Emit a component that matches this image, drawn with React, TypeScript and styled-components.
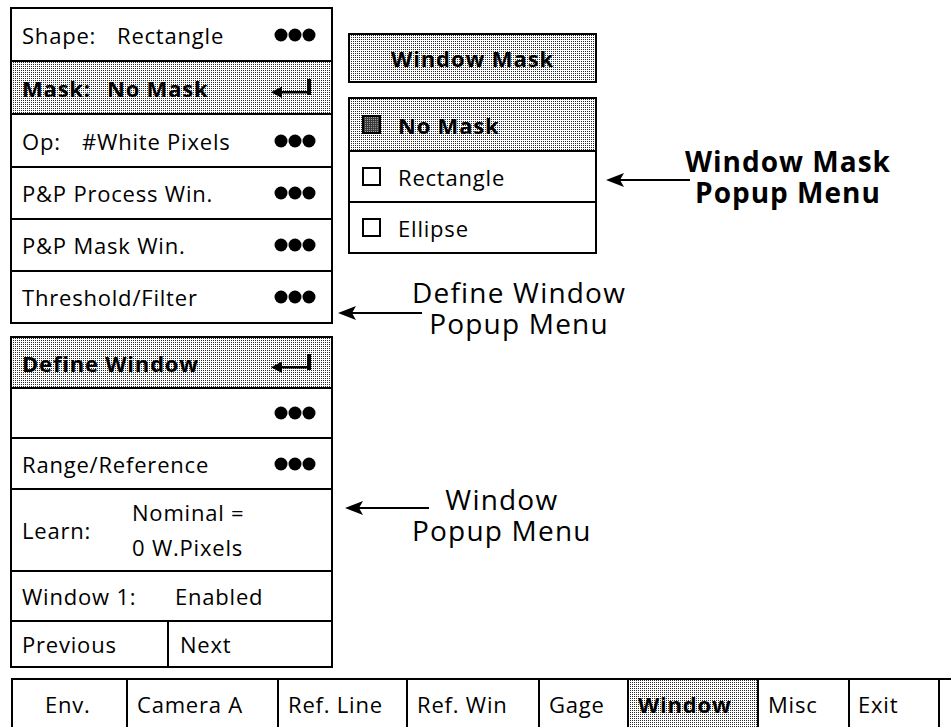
import React from "react";
import styled, { createGlobalStyle, css } from "styled-components";

const GlobalStyle = createGlobalStyle`
  *, *::before, *::after { box-sizing: border-box; }
  html, body { margin: 0; padding: 0; background: #ffffff; overflow: hidden; }
  body { font-family: "Open Sans", "Liberation Sans", sans-serif; color: #000000; }
`;

const shade = css`
  background-color: #ffffff;
  background-image: conic-gradient(#2a2a2a 0 25%, transparent 0 100%);
  background-size: 2px 2px;
`;

const Page = styled.div`
  width: 951px;
  height: 727px;
  padding: 7px 0 0 10px;
  display: flex;
  flex-direction: column;
`;

const Top = styled.div`
  display: flex;
  align-items: flex-start;
`;

const LeftCol = styled.div`
  display: flex;
  flex-direction: column;
  gap: 12px;
  width: 323px;
  flex: none;
`;

const Panel = styled.div`
  border: 2px solid #000;
  display: flex;
  flex-direction: column;
`;

const Row = styled.div<{ $h: number; $shaded?: boolean }>`
  height: ${(p) => p.$h}px;
  display: flex;
  align-items: center;
  padding: 0 15px 0 10px;
  font-size: 22px;
  letter-spacing: 0.8px;
  font-weight: ${(p) => (p.$shaded ? 700 : 400)};
  white-space: nowrap;
  & + & {
    border-top: 2px solid #000;
  }
  ${(p) => p.$shaded && shade}
`;

const Label = styled.span<{ $w?: number }>`
  display: inline-block;
  width: ${(p) => (p.$w ? `${p.$w}px` : "auto")};
  flex: none;
`;

const Stack = styled.div`
  display: flex;
  flex-direction: column;
  line-height: 35px;
`;

const SplitRow = styled(Row)`
  padding: 0;
  align-items: stretch;
`;

const Cell = styled.div<{ $w?: number; $pl: number; $divider?: boolean }>`
  display: flex;
  align-items: center;
  width: ${(p) => (p.$w ? `${p.$w}px` : "auto")};
  flex: ${(p) => (p.$w ? "none" : "1")};
  padding-left: ${(p) => p.$pl}px;
  border-left: ${(p) => (p.$divider ? "2px solid #000" : "none")};
`;

const IconSlot = styled.span<{ $mr?: number }>`
  margin-left: auto;
  margin-right: ${(p) => p.$mr ?? 0}px;
  display: flex;
  align-items: center;
`;

const RightCol = styled.div`
  flex: 1;
  display: flex;
  flex-direction: column;
`;

const Section = styled.div<{ $h?: number; $pt: number }>`
  display: flex;
  align-items: flex-start;
  padding-top: ${(p) => p.$pt}px;
  height: ${(p) => (p.$h ? `${p.$h}px` : "auto")};
`;

const PopupStack = styled.div`
  margin-left: 15px;
  width: 249px;
  display: flex;
  flex-direction: column;
  gap: 14px;
  flex: none;
`;

const PopupHeader = styled.div`
  height: 50px;
  border: 2px solid #000;
  display: flex;
  align-items: center;
  justify-content: center;
  font-size: 22px;
  font-weight: 700;
  letter-spacing: 0.9px;
  ${shade}
`;

const PopupList = styled.div`
  border: 2px solid #000;
  display: flex;
  flex-direction: column;
`;

const Option = styled.div<{ $selected?: boolean }>`
  height: 51px;
  display: flex;
  align-items: center;
  gap: 17px;
  padding-left: 12px;
  font-size: 22px;
  letter-spacing: 0.8px;
  font-weight: ${(p) => (p.$selected ? 700 : 400)};
  & + & {
    border-top: 2px solid #000;
  }
  ${(p) => p.$selected && shade}
`;

const Check = styled.span<{ $checked?: boolean }>`
  width: 19px;
  height: 19px;
  border: 2px solid #000;
  flex: none;
  background-color: ${(p) => (p.$checked ? "#3a3a3a" : "#ffffff")};
  background-image: ${(p) =>
    p.$checked ? "conic-gradient(#9a9a9a 0 25%, transparent 0 100%)" : "none"};
  background-size: 2px 2px;
`;

const Annotation = styled.div<{ $ml: number; $mt?: number }>`
  display: flex;
  align-items: flex-start;
  margin-left: ${(p) => p.$ml}px;
  margin-top: ${(p) => p.$mt ?? 0}px;
  flex: none;
`;

const ArrowSvg = styled.svg<{ $top: number }>`
  flex: none;
  margin-top: ${(p) => p.$top}px;
`;

const Caption = styled.div<{ $bold?: boolean; $shift: number }>`
  font-size: 28px;
  line-height: 31px;
  text-align: center;
  white-space: nowrap;
  font-weight: ${(p) => (p.$bold ? 700 : 400)};
  letter-spacing: ${(p) => (p.$bold ? 1 : 1.2)}px;
  margin-left: ${(p) => p.$shift}px;
`;

const CaptionLine = styled.div`
  height: 31px;
`;

const NavBar = styled.div`
  display: flex;
  margin-top: 10px;
  margin-left: 1px;
  height: 52px;
  border-top: 2px solid #000;
`;

const NavCell = styled.div<{ $w: number; $pl: number; $active?: boolean; $last?: boolean }>`
  width: ${(p) => p.$w}px;
  flex: none;
  display: flex;
  align-items: center;
  padding-left: ${(p) => p.$pl}px;
  border-left: 2px solid #000;
  border-right: ${(p) => (p.$last ? "2px solid #000" : "none")};
  font-size: 22px;
  letter-spacing: 0.8px;
  white-space: nowrap;
  font-weight: ${(p) => (p.$active ? 700 : 400)};
  ${(p) => p.$active && shade}
`;

const Dots = () => (
  <svg width="42" height="14" viewBox="0 0 42 14">
    <circle cx="7" cy="7" r="6.5" fill="#000" />
    <circle cx="21" cy="7" r="6.5" fill="#000" />
    <circle cx="35" cy="7" r="6.5" fill="#000" />
  </svg>
);

const ReturnIcon = () => (
  <svg width="42" height="20" viewBox="0 0 42 20">
    <rect x="36" y="1" width="4" height="16" fill="#000" />
    <rect x="9" y="13" width="31" height="2.5" fill="#000" />
    <polygon points="0,14.25 11,8.5 11,20" fill="#000" />
  </svg>
);

const Arrow = ({ top }: { top: number }) => (
  <ArrowSvg $top={top} width="84" height="16" viewBox="0 0 84 16">
    <polygon points="0,8 18,1 14,8 18,15" fill="#000" />
    <rect x="12" y="7" width="72" height="2" fill="#000" />
  </ArrowSvg>
);

const navItems = [
  { label: "Env.", w: 115, pl: 32 },
  { label: "Camera A", w: 151, pl: 9 },
  { label: "Ref. Line", w: 129, pl: 9 },
  { label: "Ref. Win", w: 132, pl: 9 },
  { label: "Gage", w: 89, pl: 9 },
  { label: "Window", w: 130, pl: 9, active: true },
  { label: "Misc", w: 91, pl: 9 },
  { label: "Exit", w: 92, pl: 8 },
];

export default function App() {
  return (
    <>
      <GlobalStyle />
      <Page>
        <Top>
          <LeftCol>
            <Panel>
              <Row $h={51}>
                <Label $w={95}>Shape:</Label>Rectangle
                <IconSlot><Dots /></IconSlot>
              </Row>
              <Row $h={53} $shaded>
                <Label $w={85}>Mask:</Label>No Mask
                <IconSlot $mr={3}><ReturnIcon /></IconSlot>
              </Row>
              <Row $h={53}>
                <Label $w={60}>Op:</Label>#White Pixels
                <IconSlot><Dots /></IconSlot>
              </Row>
              <Row $h={52}>
                P&amp;P Process Win.
                <IconSlot><Dots /></IconSlot>
              </Row>
              <Row $h={52}>
                P&amp;P Mask Win.
                <IconSlot><Dots /></IconSlot>
              </Row>
              <Row $h={52}>
                Threshold/Filter
                <IconSlot><Dots /></IconSlot>
              </Row>
            </Panel>
            <Panel>
              <Row $h={49} $shaded>
                Define Window
                <IconSlot $mr={3}><ReturnIcon /></IconSlot>
              </Row>
              <Row $h={50}>
                <IconSlot><Dots /></IconSlot>
              </Row>
              <Row $h={51}>
                Range/Reference
                <IconSlot><Dots /></IconSlot>
              </Row>
              <Row $h={82}>
                <Label $w={110}>Learn:</Label>
                <Stack>
                  <span>Nominal =</span>
                  <span>0 W.Pixels</span>
                </Stack>
              </Row>
              <Row $h={50}>
                <Label $w={153}>Window 1:</Label>Enabled
              </Row>
              <SplitRow $h={46}>
                <Cell $w={155} $pl={10}>Previous</Cell>
                <Cell $pl={11} $divider>Next</Cell>
              </SplitRow>
            </Panel>
          </LeftCol>
          <RightCol>
            <Section $h={263} $pt={26}>
              <PopupStack>
                <PopupHeader>Window Mask</PopupHeader>
                <PopupList>
                  <Option $selected>
                    <Check $checked />
                    No Mask
                  </Option>
                  <Option>
                    <Check />
                    Rectangle
                  </Option>
                  <Option>
                    <Check />
                    Ellipse
                  </Option>
                </PopupList>
              </PopupStack>
              <Annotation $ml={9} $mt={113}>
                <Arrow top={26} />
                <Caption $bold $shift={-5}>
                  <CaptionLine>Window Mask</CaptionLine>
                  <CaptionLine>Popup Menu</CaptionLine>
                </Caption>
              </Annotation>
            </Section>
            <Section $h={200} $pt={7}>
              <Annotation $ml={5}>
                <Arrow top={28} />
                <Caption $shift={-10}>
                  <CaptionLine>Define Window</CaptionLine>
                  <CaptionLine>Popup Menu</CaptionLine>
                </Caption>
              </Annotation>
            </Section>
            <Section $pt={14}>
              <Annotation $ml={12}>
                <Arrow top={16} />
                <Caption $shift={-17}>
                  <CaptionLine>Window</CaptionLine>
                  <CaptionLine>Popup Menu</CaptionLine>
                </Caption>
              </Annotation>
            </Section>
          </RightCol>
        </Top>
        <NavBar>
          {navItems.map((n, i) => (
            <NavCell
              key={n.label}
              $w={n.w}
              $pl={n.pl}
              $active={n.active}
              $last={i === navItems.length - 1}
            >
              {n.label}
            </NavCell>
          ))}
        </NavBar>
      </Page>
    </>
  );
}
